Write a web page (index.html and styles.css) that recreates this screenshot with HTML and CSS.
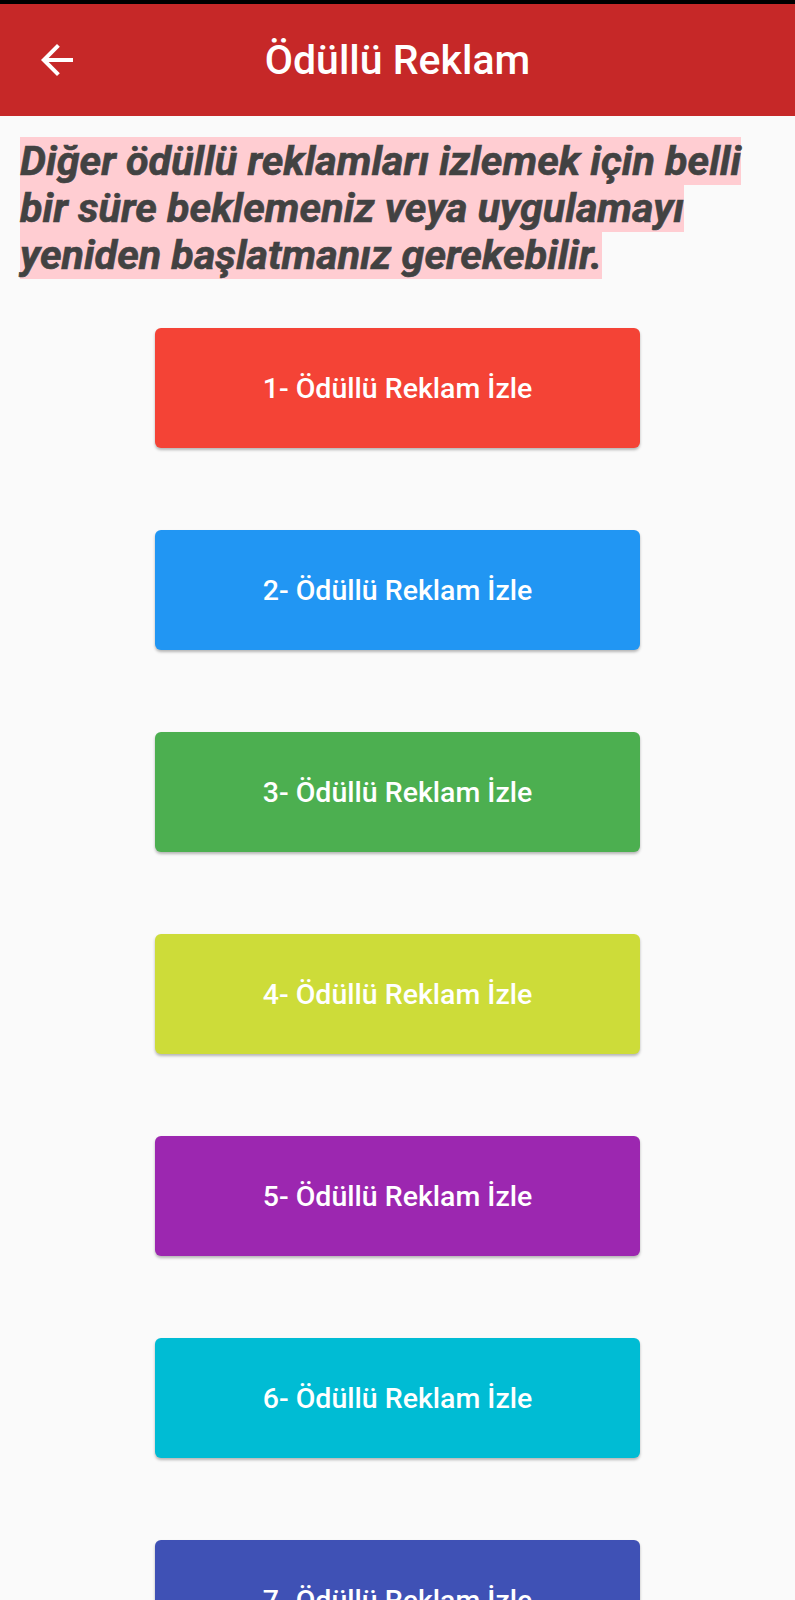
FILE: index.html
```html
<!DOCTYPE html>
<html lang="tr">
<head>
<meta charset="utf-8">
<title>Ödüllü Reklam</title>
<link rel="stylesheet" href="styles.css">
</head>
<body>
<div class="statusbar"></div>
<header class="appbar">
  <button class="back" aria-label="Geri">
    <svg viewBox="0 0 24 24" width="48" height="48"><path fill="#fff" d="M20 11H7.83l5.59-5.59L12 4l-8 8 8 8 1.41-1.41L7.83 13H20v-2z"/></svg>
  </button>
  <h1 class="title">Ödüllü Reklam</h1>
  <span></span>
</header>
<main class="content">
  <p class="notice"><span>Diğer ödüllü reklamları izlemek için belli bir süre beklemeniz veya uygulamayı yeniden başlatmanız gerekebilir.</span></p>
  <div class="buttons">
    <button class="ad-btn red">1- Ödüllü Reklam İzle</button>
    <button class="ad-btn blue">2- Ödüllü Reklam İzle</button>
    <button class="ad-btn green">3- Ödüllü Reklam İzle</button>
    <button class="ad-btn lime">4- Ödüllü Reklam İzle</button>
    <button class="ad-btn purple">5- Ödüllü Reklam İzle</button>
    <button class="ad-btn cyan">6- Ödüllü Reklam İzle</button>
    <button class="ad-btn indigo">7- Ödüllü Reklam İzle</button>
  </div>
</main>
</body>
</html>
```

FILE: styles.css
```css
* { box-sizing: border-box; }
html, body {
  margin: 0;
  padding: 0;
  background: #fafafa;
  font-family: Roboto, "Noto Sans", sans-serif;
}
.statusbar {
  height: 4px;
  background: #000;
}
.appbar {
  height: 112px;
  background: #c62828;
  display: grid;
  grid-template-columns: 1fr auto 1fr;
  align-items: center;
}
.back {
  justify-self: start;
  margin-left: 33px;
  padding: 0;
  border: 0;
  background: none;
  width: 48px;
  height: 48px;
  display: flex;
}
.title {
  margin: 0;
  color: #fff;
  font-size: 41px;
  font-weight: 500;
  line-height: 1;
}
.content {
  padding: 22px 20px 0;
}
.notice {
  margin: 0;
  font-size: 41.3px;
  line-height: 47px;
  font-weight: 700;
  font-style: italic;
  color: #424242;
  -webkit-text-stroke: 0.6px #424242;
}
.notice span {
  background: #ffcdd2;
}
.buttons {
  margin-top: 49px;
  display: flex;
  flex-direction: column;
  align-items: center;
  gap: 82px;
  padding-bottom: 40px;
}
.ad-btn {
  width: 485px;
  height: 120px;
  border: 0;
  border-radius: 6px;
  color: #fff;
  font-family: Roboto, "Noto Sans", sans-serif;
  font-size: 28.5px;
  font-weight: 500;
  box-shadow: 0 2px 3px rgba(0,0,0,0.28);
}
.red { background: #f44336; }
.blue { background: #2196f3; }
.green { background: #4caf50; }
.lime { background: #cddc39; }
.purple { background: #9c27b0; }
.cyan { background: #00bcd4; }
.indigo { background: #3f51b5; }
```
